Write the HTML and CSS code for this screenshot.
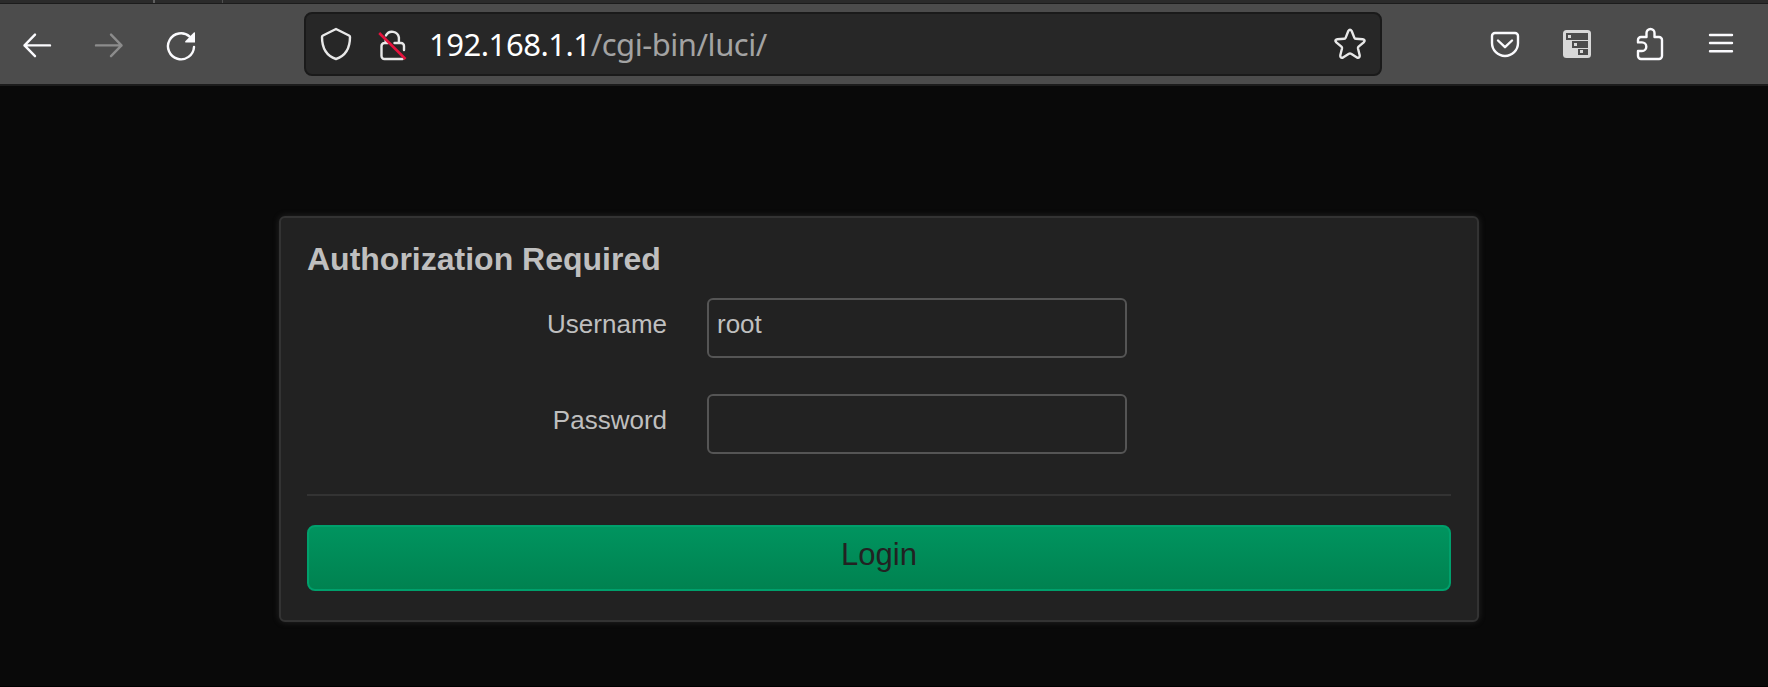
FILE: index.html
```html
<!DOCTYPE html>
<html lang="en">
<head>
<meta charset="utf-8">
<title>LuCI</title>
<link rel="stylesheet" href="styles.css">
</head>
<body>
<div class="tabstrip"><span class="tab-a"></span><span class="tab-b"></span></div>
<header class="toolbar">
  <nav class="nav">
    <svg class="icon" viewBox="0 0 32 32"><path d="M3.5 16.4H29M14 5.6L3.5 16.4L14 27.2"/></svg>
    <svg class="icon dim" viewBox="0 0 32 32"><path d="M3 16.4H28.5M18 5.6L28.5 16.4L18 27.2"/></svg>
    <svg class="icon" viewBox="0 0 32 32"><path d="M29 18A13 13 0 1 1 24.7 7.6"/><path class="solid" d="M30 4V13.5H20.6q-1-.4-.3-1.3L28.6 3.7q.8-.7 1.4-.1Z"/></svg>
  </nav>
  <div class="urlbar">
    <svg class="icon soft shield" viewBox="0 0 32 32"><path d="M16 1L29 7.5Q30 8.1 30 9C30 20 25 28 16 31C7 28 2 20 2 9Q2 8.1 3 7.5Z"/></svg>
    <svg class="icon soft lock" viewBox="0 0 32 32"><path d="M10 7.4A6.9 6.9 0 0 1 22.9 9.5V15M9.6 12.5V15M18.5 15H25A3 3 0 0 1 28 18V22M12 15H8.5A3 3 0 0 0 5.5 18V28A3 3 0 0 0 8.5 31H26.5"/><path class="strike" d="M3.2 5L29.5 31"/></svg>
    <div class="url"><span class="host">192.168.1.1</span><span class="path">/cgi-bin/luci/</span></div>
    <svg class="icon soft star" viewBox="0 0 32 32"><path d="M14.2 3.2Q16 0.3 17.8 3.2L20.3 9.6Q20.7 10.7 21.8 10.8L28.7 11.3Q32 11.9 29.7 14.3L24.6 18.7Q23.8 19.5 24 20.5L25.7 27.2Q26 30.5 23 29.6L17.1 25.8Q16 25.2 14.9 25.8L9 29.6Q6 30.5 6.3 27.2L8 20.5Q8.2 19.5 7.4 18.7L2.3 14.3Q0 11.9 3.3 11.3L10.2 10.8Q11.3 10.7 11.7 9.6Z"/></svg>
  </div>
  <div class="actions">
    <svg class="icon" viewBox="0 0 32 32"><path d="M6 5H26A3 3 0 0 1 29 8V15A13 13 0 0 1 3 15V8A3 3 0 0 1 6 5ZM9 12.5L16 19.2L23 12.5"/></svg>
    <svg class="icon" viewBox="0 0 32 32"><rect class="tile" x="2" y="2" width="28" height="28" rx="3.5"/><path class="slot" d="M5 5H27V12H5ZM11 13H27V20H11ZM17 21H27V27H17Z"/><path class="tile" d="M7 7h3v3h-3ZM13 15h3v3h-3ZM19 22h3v3h-3Z"/></svg>
    <svg class="icon" viewBox="0 0 32 32"><path d="M5 14V12A3 3 0 0 1 8 9H13.5V5A4 4 0 0 1 21.5 5V9H26A3 3 0 0 1 29 12V28A3 3 0 0 1 26 31H8A3 3 0 0 1 5 28V23H9A4.3 4.3 0 0 0 9 14.4H5V12"/></svg>
    <svg class="icon" viewBox="0 0 32 32"><path d="M5 7H27M5 15H27M5 23.2H27"/></svg>
  </div>
</header>
<main class="page">
  <form class="card">
    <h1 class="title">Authorization Required</h1>
    <div class="row"><label class="label" for="user">Username</label><input class="field" id="user" type="text" value="root"></div>
    <div class="row"><label class="label" for="pass">Password</label><input class="field" id="pass" type="password"></div>
    <hr class="rule">
    <button class="login" type="button">Login</button>
  </form>
</main>
</body>
</html>
```
FILE: styles.css
```css
* { box-sizing: border-box; }
html { height: 687px; overflow: hidden; background: #090909; }
body { margin: 0; height: 687px; overflow: hidden; display: flex; flex-direction: column; background: #090909; border-bottom: 1px solid #000; font-family: "Liberation Sans", Arial, sans-serif; }
.tabstrip { display: flex; height: 4px; flex: none; padding-left: 153px; gap: 67px; background: #2b2b2b; border-bottom: 1px solid #1c1c1c; }
.tab-a { width: 2px; background: #606060; }
.tab-b { width: 1px; background: #505050; }
.toolbar { display: flex; align-items: center; flex: none; height: 82px; padding: 0 31px 0 21px; background: #4c4c4c; border-bottom: 2px solid #1c1c1c; }
.nav { display: flex; gap: 40px; width: 283px; padding-top: 2px; }
.icon { display: block; flex: none; width: 32px; height: 32px; fill: none; stroke: #fbfbfe; stroke-width: 2.4; stroke-linecap: round; stroke-linejoin: round; overflow: visible; }
.dim { stroke: #8c8c8c; }
.soft { stroke: #e8e8e8; }
.solid { fill: #fbfbfe; stroke: none; }
.strike { stroke: #e6123d; stroke-width: 2.6; stroke-linecap: butt; }
.tile { fill: #d8d8d8; stroke: none; }
.slot { fill: #4c4c4c; stroke: none; }
.urlbar { display: flex; align-items: center; width: 1078px; height: 64px; padding: 0 14px; background: #272727; border: 2px solid #1a1a1a; border-radius: 8px; }
.lock { margin-left: 24px; }
.url { flex: 1; padding-left: 21px; font: 31px/40px "Noto Sans", sans-serif; letter-spacing: -.47px; white-space: nowrap; }
.host { color: #fff; }
.path { color: #a3a3a3; }
.actions { display: flex; gap: 40px; flex: 1; justify-content: flex-end; }
.page { flex: 1; padding: 130px 0 0 279px; }
.card { width: 1200px; height: 406px; padding: 22px 26px 26px; background: #222; border: 2px solid #333; border-radius: 6px; box-shadow: 0 0 6px rgba(72,72,72,.45); }
.title { margin: 0 0 20px; font-size: 32px; line-height: 38px; color: #bfbfbf; }
.row { display: flex; height: 60px; margin-bottom: 36px; }
.label { width: 360px; margin-right: 40px; text-align: right; font-size: 26px; line-height: 53px; color: #bfbfbf; }
.field { width: 420px; height: 60px; padding: 0 8px 7px; background: #222; border: 2px solid #555; border-radius: 6px; outline: none; color: #bfbfbf; font: 26px "Liberation Sans", sans-serif; }
.rule { height: 2px; margin: 40px 0 29px; border: 0; background: #333; }
.login { display: block; width: 100%; height: 66px; padding: 0 0 7px; border: 2px solid #00a06c; border-radius: 8px; background: linear-gradient(#00945f, #008250); color: #222; font: 31px "Liberation Sans", sans-serif; }
```
